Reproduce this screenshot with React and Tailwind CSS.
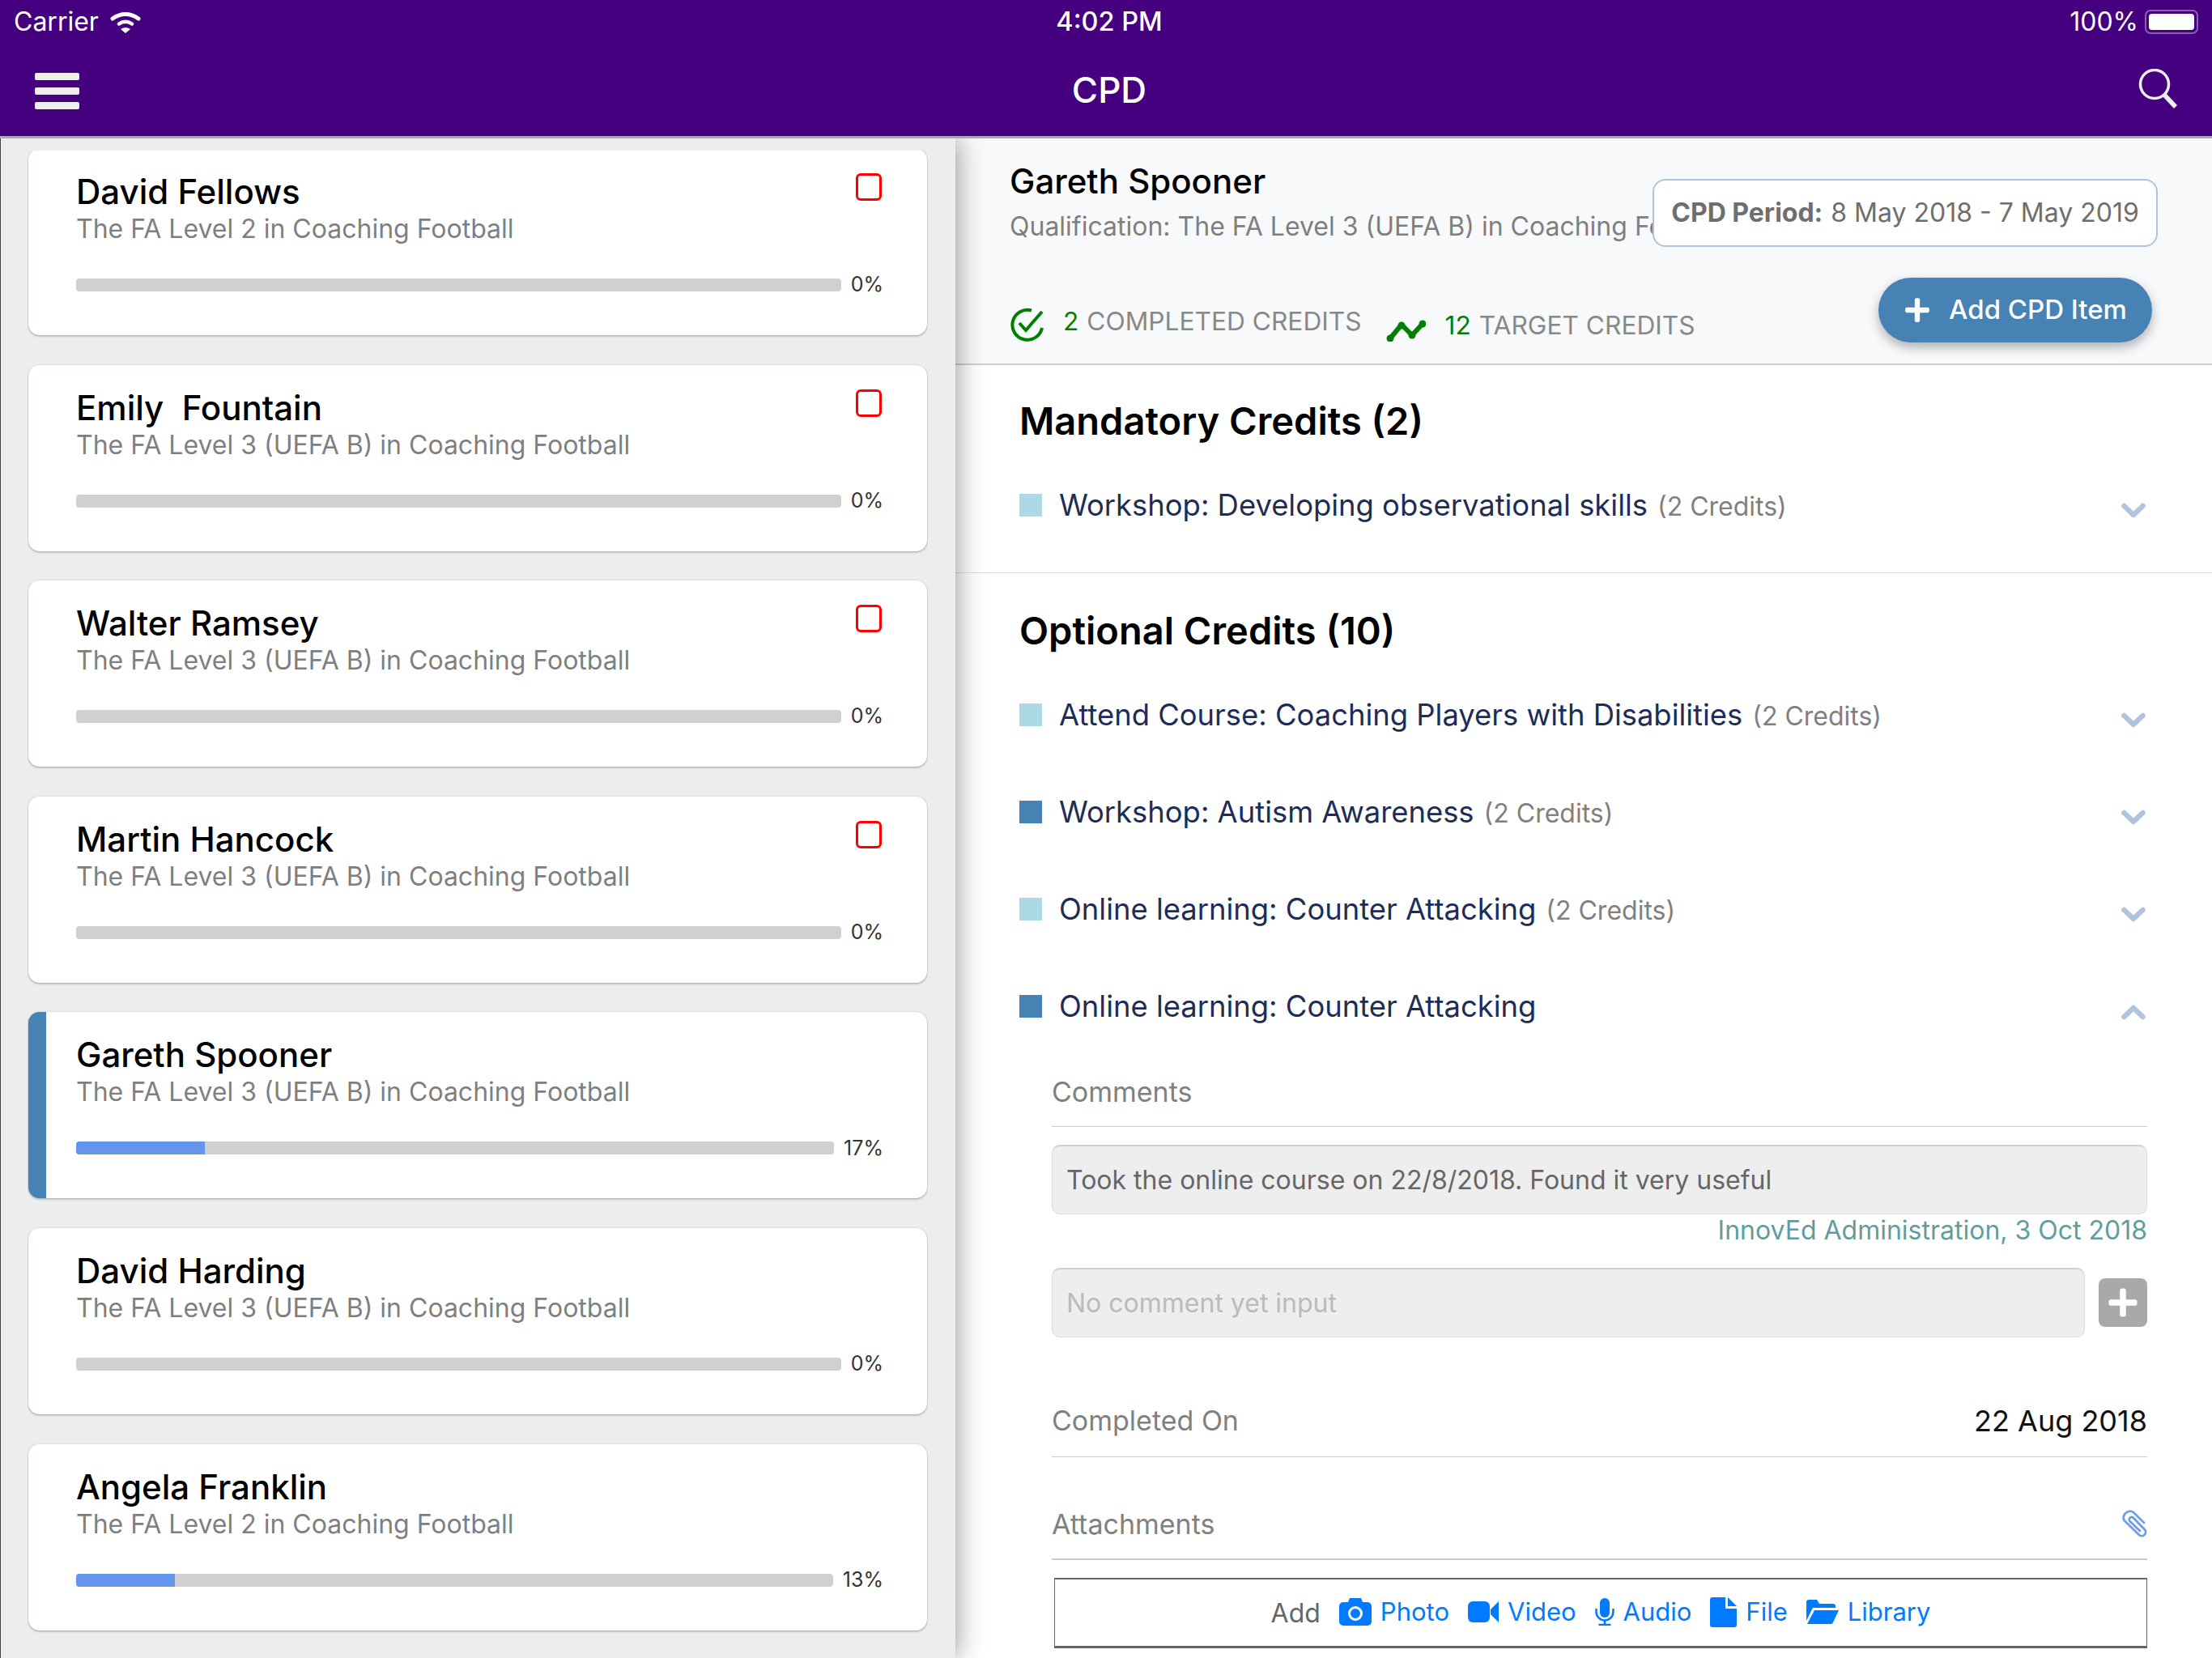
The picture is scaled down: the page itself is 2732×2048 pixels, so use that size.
import { FaPlus } from "react-icons/fa";

const learners = [
  { name: "David Fellows", course: "The FA Level 2 in Coaching Football", pct: 0, todo: true },
  { name: "Emily  Fountain", course: "The FA Level 3 (UEFA B) in Coaching Football", pct: 0, todo: true },
  { name: "Walter Ramsey", course: "The FA Level 3 (UEFA B) in Coaching Football", pct: 0, todo: true },
  { name: "Martin Hancock", course: "The FA Level 3 (UEFA B) in Coaching Football", pct: 0, todo: true },
  { name: "Gareth Spooner", course: "The FA Level 3 (UEFA B) in Coaching Football", pct: 17, active: true },
  { name: "David Harding", course: "The FA Level 3 (UEFA B) in Coaching Football", pct: 0 },
  { name: "Angela Franklin", course: "The FA Level 2 in Coaching Football", pct: 13 },
];

const Chevron = ({ up }) => (
  <svg width="30" height="20" viewBox="0 0 30 20" className="mt-[14px] mr-[2px] shrink-0">
    <polyline
      points={up ? "3.5,16 15,5 26.5,16" : "3.5,4 15,15 26.5,4"}
      fill="none"
      stroke="#b0c4de"
      strokeWidth="6.5"
      strokeLinecap="round"
      strokeLinejoin="round"
    />
  </svg>
);

const Wifi = () => (
  <svg width="38" height="28" viewBox="0 0 38 28">
    <path d="M3 10 Q19 -1 35 10" fill="none" stroke="#fff" strokeWidth="5" strokeLinecap="round" />
    <path d="M11 16.5 Q19 11 27 16.5" fill="none" stroke="#fff" strokeWidth="4.5" strokeLinecap="round" />
    <path d="M13 23 Q19 19 25 23 L19 28 Z" fill="#fff" />
  </svg>
);

const SearchIcon = () => (
  <svg width="50" height="52" viewBox="0 0 50 52">
    <circle cx="20" cy="19" r="17.5" fill="none" stroke="#eeeeee" strokeWidth="3.5" />
    <line x1="32" y1="32" x2="46" y2="47" stroke="#eeeeee" strokeWidth="5.5" />
  </svg>
);

const ClipIcon = () => (
  <svg width="32" height="38" viewBox="20 12 32 38" className="mt-[5px]">
    <path
      d="M48 31 L35 18 A8 8 0 0 0 23.500 28 L42 46 A4.800 4.800 0 0 0 49 39.500 L35 25 A2.800 2.800 0 0 0 30.500 29 L43 41"
      fill="none"
      stroke="#6f9ee8"
      strokeWidth="2.800"
      strokeLinecap="round"
    />
  </svg>
);

const CameraIcon = () => (
  <svg width="40" height="34" viewBox="0 0 40 34" fill="#007aff">
    <path d="M13 0h14l2 5h6a5 5 0 0 1 5 5v19a5 5 0 0 1-5 5H5a5 5 0 0 1-5-5V10a5 5 0 0 1 5-5h6z" />
    <circle cx="20" cy="19" r="7.500" fill="none" stroke="#fff" strokeWidth="3" />
  </svg>
);

const VideoIcon = () => (
  <svg width="38" height="26" viewBox="0 0 38 26" fill="#007aff">
    <rect width="27" height="26" rx="6" />
    <path d="M28 10 L38 0 V26 L28 16 Z" />
  </svg>
);

const MicIcon = () => (
  <svg width="24" height="34" viewBox="0 0 24 34" fill="none" stroke="#007aff" strokeWidth="2.500">
    <rect x="6" y="0" width="12" height="24" rx="6" fill="#007aff" stroke="none" />
    <path d="M1.500 13 v4 a10.500 10.500 0 0 0 21 0 v-4" />
    <path d="M12 27.500 V33 M4.500 33 H19.500" />
  </svg>
);

const FileIcon = () => (
  <svg width="33" height="37" viewBox="0 0 33 37" fill="#007aff">
    <path d="M0 3 a3 3 0 0 1 3-3 H19 V14 H33 V34 a3 3 0 0 1-3 3 H3 a3 3 0 0 1-3-3 Z" />
    <path d="M22 0 L33 11 H22 Z" />
  </svg>
);

const FolderIcon = () => (
  <svg width="40" height="30" viewBox="0 0 40 30" fill="#007aff">
    <path d="M0 3 a3 3 0 0 1 3-3 H13 l3 5 H33 a3 3 0 0 1 3 3 V10 H8 L0 26 Z" />
    <path d="M10 13 H40 L33 28 a3 3 0 0 1-3 2 H1 Z" />
  </svg>
);

const LearnerCard = ({ learner }) => (
  <div
    className={`h-[230px] shrink-0 rounded-[14px] bg-white pr-[54px] shadow-[0_1px_3px_rgba(0,0,0,0.35)] ${
      learner.active ? "border-l-[22px] border-[#4682b4] pl-[37px]" : "pl-[59px]"
    }`}
  >
    <div className="flex items-start justify-between">
      <div>
        <div className="mt-[30px] h-[46px] text-[42px] leading-[46px] font-medium whitespace-pre text-black">
          {learner.name}
        </div>
        <div className="h-[46px] text-[32px] leading-[46px] text-[#7f7f7f]">{learner.course}</div>
      </div>
      {learner.todo && (
        <div className="mt-[30px] mr-[2px] h-[34px] w-[32px] rounded-[6px] border-[3px] border-[#ff0000]" />
      )}
    </div>
    <div className="mt-[26px] flex h-[40px] items-center">
      <div className="h-[16px] flex-1 overflow-hidden rounded-[4px] bg-[#d0d0d0]">
        <div className="h-full bg-[#6495ed]" style={{ width: `${learner.pct}%` }} />
      </div>
      <div className="ml-[12px] text-[25px] text-[#333]">{learner.pct}%</div>
    </div>
  </div>
);

const CreditRow = ({ label, credits, dark, up }) => (
  <div className="flex h-[120px] items-center">
    <div className={`h-[28px] w-[28px] shrink-0 ${dark ? "bg-[#4682b4]" : "bg-[#add8e6]"}`} />
    <div className="ml-[21px] flex-1 text-[36.400px] text-[#1e2d55]">
      {label}
      {credits && <span className="ml-[12px] text-[32px] text-[#808080]">({credits} Credits)</span>}
    </div>
    <Chevron up={up} />
  </div>
);

const AddLink = ({ icon, label }) => (
  <div className="flex items-center gap-[11px] text-[31px] text-[#007aff]">
    {icon}
    <span>{label}</span>
  </div>
);

export default function App() {
  return (
    <div className="flex h-[2048px] w-[2732px] flex-col overflow-hidden bg-white font-['Inter',sans-serif]">
      {/* header */}
      <div className="relative z-20 h-[171px] shrink-0 border-b-[3px] border-[#aaaaaa] bg-[#44007f] text-white">
        <div className="grid h-[54px] grid-cols-[1fr_auto_1fr] items-center">
          <div className="flex items-center pl-[17px] text-[32px]">
            Carrier
            <span className="ml-[14px]">
              <Wifi />
            </span>
          </div>
          <div className="ml-[8px] text-[32.500px] font-medium">4:02 PM</div>
          <div className="flex items-center justify-end pr-[17px] text-[32px]">
            100%
            <div className="ml-[8px] flex h-[30px] w-[66px] items-center rounded-[7px] border-2 border-[#8a60b0] p-[3px]">
              <div className="h-full w-full rounded-[4px] bg-white" />
            </div>
          </div>
        </div>
        <div className="grid h-[114px] grid-cols-[1fr_auto_1fr] items-center">
          <div className="mt-[3px] ml-[43px] flex w-[55px] flex-col gap-[9px]">
            <div className="h-[9px] rounded-[2px] bg-[#eeeeee]" />
            <div className="h-[9px] rounded-[2px] bg-[#eeeeee]" />
            <div className="h-[9px] rounded-[2px] bg-[#eeeeee]" />
          </div>
          <div className="ml-[8px] text-[44px] font-medium">CPD</div>
          <div className="flex justify-end pr-[41px]">
            <SearchIcon />
          </div>
        </div>
      </div>

      <div className="flex min-h-0 flex-1">
        {/* learner list */}
        <div className="relative z-10 w-[1180px] shrink-0 overflow-hidden border-l border-[#444] bg-[#eceeee] pr-[34px] pl-[33px] shadow-[0_0_32px_rgba(0,0,0,0.45)]">
          <div className="mt-[15px] h-full overflow-hidden">
            <div className="-mt-[2px] flex flex-col gap-[36.600px] px-[1px]">
              {learners.map((learner) => (
                <LearnerCard key={learner.name} learner={learner} />
              ))}
            </div>
          </div>
        </div>

        {/* detail */}
        <div className="min-w-0 flex-1 bg-white">
          <div className="h-[280px] border-b-2 border-[#cfcfcf] bg-[#f8f9fb] pl-[67px]">
            <div className="flex h-[134px]">
              <div className="min-w-0 flex-1 overflow-hidden whitespace-nowrap">
                <div className="mt-[30px] h-[46px] text-[42px] leading-[46px] font-medium text-black">
                  Gareth Spooner
                </div>
                <div className="mt-[10px] h-[46px] text-[32px] leading-[46px] text-[#7f7f7f]">
                  Qualification: The FA Level 3 (UEFA B) in Coaching Football
                </div>
              </div>
              <div className="mt-[50px] mr-[67px] flex h-[84px] w-[624px] shrink-0 items-center justify-center rounded-[16px] border-2 border-[#b0c4de] bg-white text-[32px] text-[#6e6e6e]">
                <span className="mr-[10px] font-bold">CPD Period:</span>8 May 2018 - 7 May 2019
              </div>
            </div>
            <div className="mt-[38px] flex h-[80px] items-end pr-[74px]">
              <svg width="44" height="44" viewBox="0 0 44 44" className="shrink-0">
                <path d="M40 26 A18.500 18.500 0 1 1 27 4.500" fill="none" stroke="#008000" strokeWidth="4" />
                <polyline points="12,20 20,29 40,6" fill="none" stroke="#008000" strokeWidth="4" />
              </svg>
              <div className="mb-[8px] ml-[22px] text-[31.700px] leading-[36px] text-[#888]">
                <span className="mr-[10px] text-[#008000]">2</span>COMPLETED CREDITS
              </div>
              <svg width="50" height="30" viewBox="0 0 50 30" className="mb-[1px] ml-[29px] shrink-0">
                <polyline
                  points="6,26 20,9 33,22 46,8"
                  fill="none"
                  stroke="#008000"
                  strokeWidth="6"
                  strokeLinejoin="round"
                  strokeLinecap="round"
                />
                <circle cx="6" cy="26" r="4.500" fill="#008000" />
                <circle cx="20" cy="10" r="4.500" fill="#008000" />
                <circle cx="33" cy="22" r="4.500" fill="#008000" />
                <circle cx="46" cy="8" r="4.500" fill="#008000" />
              </svg>
              <div className="mb-[3px] ml-[24px] text-[31.700px] leading-[36px] text-[#888]">
                <span className="mr-[10px] text-[#008000]">12</span>TARGET CREDITS
              </div>
              <div className="ml-auto flex h-[80px] w-[338px] items-center justify-center gap-[22px] self-start rounded-[40px] bg-[#4682b4] text-[33px] font-medium text-white shadow-[0_6px_14px_rgba(0,0,0,0.3)]">
                <FaPlus size={34} />
                Add CPD Item
              </div>
            </div>
          </div>

          <div className="border-b border-[#dddddd] pr-[80px] pb-[23px] pl-[79px]">
            <div className="pt-[39px] text-[47px] leading-[60px] font-semibold text-black">
              Mandatory Credits (2)
            </div>
            <div className="mt-[14px]">
              <CreditRow label="Workshop: Developing observational skills" credits={2} />
            </div>
          </div>

          <div className="pr-[80px] pl-[79px]">
            <div className="pt-[41px] text-[47px] leading-[60px] font-semibold text-black">
              Optional Credits (10)
            </div>
            <div className="mt-[14px]">
              <CreditRow label="Attend Course: Coaching Players with Disabilities" credits={2} />
              <CreditRow label="Workshop: Autism Awareness" credits={2} dark />
              <CreditRow label="Online learning: Counter Attacking" credits={2} />
              <CreditRow label="Online learning: Counter Attacking" dark up />
            </div>

            <div className="ml-[40px]">
              <div className="flex h-[89px] items-center border-b border-[#cccccc] pt-[2px] text-[34px] text-[#808080]">
                Comments
              </div>
              <div className="mt-[22px] flex h-[86px] items-center rounded-[10px] border border-t-2 border-[#dddddd] border-t-[#cfcfcf] bg-[#eeeeee] pl-[17px] text-[32px] text-[#666]">
                Took the online course on 22/8/2018. Found it very useful
              </div>
              <div className="h-[40px] text-right text-[32px] leading-[40px] text-[#5f9ea0]">
                InnovEd Administration, 3 Oct 2018
              </div>
              <div className="mt-[26px] flex h-[86px] items-center gap-[17px]">
                <div className="flex h-full flex-1 items-center rounded-[10px] border border-t-2 border-[#dddddd] border-t-[#cfcfcf] bg-[#eeeeee] pl-[17px] text-[32px] text-[#bbbbbb]">
                  No comment yet input
                </div>
                <div className="flex h-[60px] w-[60px] items-center justify-center rounded-[8px] bg-[#a9a9a9] text-white">
                  <FaPlus size={40} />
                </div>
              </div>
              <div className="mt-[77px] flex h-[71px] items-start justify-between border-b border-[#cccccc] text-[34px] leading-[52px] text-[#808080]">
                Completed On
                <span className="text-[36px] text-[#111]">22 Aug 2018</span>
              </div>
              <div className="flex h-[127px] items-start justify-between border-b-2 border-[#cccccc] pt-[57px] text-[34px] leading-[52px] text-[#808080]">
                Attachments
                <ClipIcon />
              </div>
              <div className="mt-[22px] ml-[3px] flex h-[87px] items-center justify-center gap-[23px] border border-t-2 border-b-[3px] border-[#666] pb-[2px]">
                <span className="pt-[4px] text-[32px] text-[#666]">Add</span>
                <AddLink icon={<CameraIcon />} label="Photo" />
                <AddLink icon={<VideoIcon />} label="Video" />
                <AddLink icon={<MicIcon />} label="Audio" />
                <AddLink icon={<FileIcon />} label="File" />
                <AddLink icon={<FolderIcon />} label="Library" />
              </div>
            </div>
          </div>
        </div>
      </div>
    </div>
  );
}
